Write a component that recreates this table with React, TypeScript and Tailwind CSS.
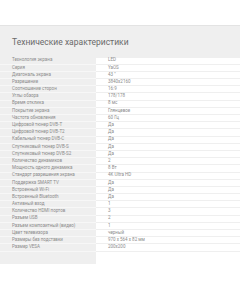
import React from "react";

const rows: [string, string][] = [
  ["Технология экрана", "LED"],
  ["Серия", "YaOS"],
  ["Диагональ экрана", "43 \""],
  ["Разрешение", "3840x2160"],
  ["Соотношение сторон", "16:9"],
  ["Углы обзора", "178/178"],
  ["Время отклика", "8 мс"],
  ["Покрытие экрана", "Глянцевое"],
  ["Частота обновления", "60 Гц"],
  ["Цифровой тюнер DVB-T", "Да"],
  ["Цифровой тюнер DVB-T2", "Да"],
  ["Кабельный тюнер DVB-C", "Да"],
  ["Спутниковый тюнер DVB-S", "Да"],
  ["Спутниковый тюнер DVB-S2", "Да"],
  ["Количество динамиков", "2"],
  ["Мощность одного динамика", "8 Вт"],
  ["Стандарт разрешения экрана", "4K Ultra HD"],
  ["Поддержка SMART TV", "Да"],
  ["Встроенный Wi-Fi", "Да"],
  ["Встроенный Bluetooth", "Да"],
  ["Активный вход", "1"],
  ["Количество HDMI портов", "3"],
  ["Разъем USB", "2"],
  ["Разъем композитный (видео)", "1"],
  ["Цвет телевизора", "черный"],
  ["Размеры без подставки", "970 x 564 x 82 мм"],
  ["Размер VESA", "200x200"],
];

export default function App() {
  return (
    <div
      className="w-[240px] h-[290px] bg-white overflow-hidden pt-[25px]"
      style={{ fontFamily: "Roboto, 'Noto Sans', sans-serif" }}
    >
      <div className="border-t border-[#e3e3e3] bg-[#efefef]">
        <div className="h-[31.5px] px-[12px] flex items-center text-[8.5px] text-[#6a6a6a] leading-none">
          Технические характеристики
        </div>
      </div>
      <div className="flex">
        <div className="w-[96px] bg-[#efefef] pb-[12px]">
          {rows.map(([k]) => (
            <div
              key={k}
              className="h-[7.2px] pl-[12px] flex items-center text-[4.5px] leading-none text-[#8c8c8c] whitespace-nowrap border-b border-[#f7f7f7]"
            >
              {k}
            </div>
          ))}
        </div>
        <div className="flex-1 bg-white">
          {rows.map(([k, v]) => (
            <div
              key={k}
              className="h-[7.2px] pl-[12px] flex items-center text-[4.5px] leading-none text-[#8c8c8c] whitespace-nowrap border-b border-[#efefef]"
            >
              {v}
            </div>
          ))}
        </div>
      </div>
    </div>
  );
}
